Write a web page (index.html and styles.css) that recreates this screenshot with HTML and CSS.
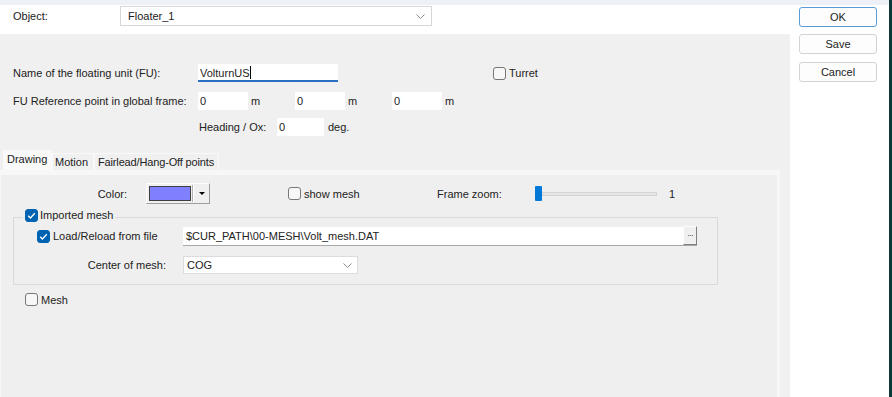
FILE: index.html
```html
<!DOCTYPE html>
<html>
<head>
<meta charset="utf-8">
<title>Floating unit</title>
<link rel="stylesheet" href="styles.css">
</head>
<body>
<div class="app">
  <div class="top-strip"></div>
  <div class="window">
    <div class="main">
      <div class="header">
        <span class="obj-lbl">Object:</span>
        <div class="combo obj-combo">
          <span>Floater_1</span>
          <svg class="chev" width="9" height="5" viewBox="0 0 9 5"><polyline points="0.5,0.5 4.5,4.5 8.5,0.5" fill="none" stroke="#8a8a8a" stroke-width="1"/></svg>
        </div>
      </div>
      <div class="panel">
        <div class="row name-row">
          <span class="lbl-w">Name of the floating unit (FU):</span>
          <div class="field name-field">VolturnUS<span class="caret"></span></div>
          <label class="check turret"><span class="box"></span>Turret</label>
        </div>
        <div class="row ref-row">
          <span class="lbl-w">FU Reference point in global frame:</span>
          <div class="field num">0</div><span class="unit">m</span>
          <div class="field num">0</div><span class="unit">m</span>
          <div class="field num">0</div><span class="unit">m</span>
        </div>
        <div class="row head-row">
          <span class="heading-lbl">Heading / Ox:</span>
          <div class="field num head-field">0</div><span class="deg">deg.</span>
        </div>
        <div class="tabs">
          <div class="tab active t1">Drawing</div>
          <div class="tab t2">Motion</div>
          <div class="tab t3">Fairlead/Hang-Off points</div>
        </div>
        <div class="tabpanel">
          <div class="r1">
            <span class="color-lbl">Color:</span>
            <div class="colorbtn">
              <span class="swatch"></span>
              <span class="sep"></span>
              <span class="arrow-cell"><span class="arrow"></span></span>
            </div>
            <label class="check showmesh"><span class="box"></span>show mesh</label>
            <span class="zoom-lbl">Frame zoom:</span>
            <div class="slider"><span class="thumb"></span><span class="track"></span></div>
            <span class="zoom-val">1</span>
          </div>
          <fieldset class="group">
            <legend class="legend"><span class="box on"><svg width="11" height="11" viewBox="0 0 11 11"><polyline points="2.2,5.8 4.4,8 8.8,3.2" fill="none" stroke="#fff" stroke-width="1.3"/></svg></span><span>Imported mesh</span></legend>
            <div class="grow load-row">
              <label class="check load-check"><span class="box on"><svg width="11" height="11" viewBox="0 0 11 11"><polyline points="2.2,5.8 4.4,8 8.8,3.2" fill="none" stroke="#fff" stroke-width="1.3"/></svg></span>Load/Reload from file</label>
              <div class="file-field"><span>$CUR_PATH\00-MESH\Volt_mesh.DAT</span><span class="dots">···</span></div>
            </div>
            <div class="grow center-row">
              <span class="center-lbl">Center of mesh:</span>
              <div class="combo cog">
                <span>COG</span>
                <svg class="chev" width="9" height="5" viewBox="0 0 9 5"><polyline points="0.5,0.5 4.5,4.5 8.5,0.5" fill="none" stroke="#8a8a8a" stroke-width="1"/></svg>
              </div>
            </div>
          </fieldset>
          <label class="check mesh-check"><span class="box"></span>Mesh</label>
        </div>
      </div>
    </div>
    <div class="side">
      <div class="btn btn-ok">OK</div>
      <div class="btn">Save</div>
      <div class="btn btn-cancel">Cancel</div>
    </div>
  </div>
</div>
<div class="edge"></div>
</body>
</html>
```
FILE: styles.css
```css
* { box-sizing: border-box; }
html, body { margin: 0; padding: 0; }
body {
  width: 892px;
  height: 397px;
  overflow: hidden;
  display: flex;
  background: #fff;
  font-family: "Liberation Sans", Arial, sans-serif;
  font-size: 11px;
  color: #222;
}
.app { width: 889px; display: flex; flex-direction: column; }
.edge { width: 3px; background: #0b3a3a; }
.top-strip { height: 5px; background: #edf1f7; }
.window { flex: 1; display: flex; }
.main { width: 790px; display: flex; flex-direction: column; }

.header {
  height: 29px;
  background: #fff;
  display: flex;
  align-items: flex-start;
  padding: 1px 0 0 13px;
}
.obj-lbl { width: 107px; line-height: 20px; }
.combo {
  height: 20px;
  background: #fff;
  border: 1px solid #d6d6d6;
  display: flex;
  align-items: center;
  justify-content: space-between;
}
.obj-combo { width: 312px; padding: 0 6px 0 7px; }
.chev { display: block; }

.panel { flex: 1; background: #f0f0f0; padding-top: 30px; display: flex; flex-direction: column; }
.row { display: flex; align-items: center; height: 18px; padding-left: 13px; }
.lbl-w { width: 185px; }
.field {
  height: 18px;
  background: #fff;
  display: flex;
  align-items: center;
  padding-left: 2px;
}
.name-field { width: 140px; border-bottom: 2px solid #2a6fc4; padding-top: 1px; }
.caret { display: inline-block; width: 1px; height: 13px; background: #000; }
.num { width: 50px; }
.unit { width: 47px; padding-left: 3px; }
.turret { margin-left: 155px; }
.ref-row { margin-top: 10px; }
.head-row { margin-top: 8px; }
.heading-lbl { margin-left: 186px; width: 78px; }
.head-field { width: 47px; }
.deg { margin-left: 4px; }

.check { display: flex; align-items: center; gap: 3px; white-space: nowrap; }
.box {
  width: 13px;
  height: 13px;
  border: 1px solid #777;
  border-radius: 3px;
  background: #f7f7f7;
  display: flex;
  align-items: center;
  justify-content: center;
  flex: none;
}
.box.on { background: #0063b1; border-color: #0063b1; }
.box svg { display: block; }

.tabs {
  margin-top: 14px;
  height: 20px;
  display: flex;
  align-items: flex-end;
  padding-left: 3px;
}
.tab {
  height: 17px;
  display: flex;
  align-items: center;
  white-space: nowrap;
  border: 1px solid #f9f9f9;
  border-bottom: none;
  background: #f0f0f0;
}
.tab.active { height: 20px; background: #f9f9f9; align-items: flex-start; padding-top: 2px; }
.t1 { width: 49px; padding-left: 3px; }
.t2 { width: 42px; padding-left: 2px; }
.t3 { width: 125px; padding-left: 3px; letter-spacing: -0.15px; }

.tabpanel {
  flex: 1;
  margin-right: 10px;
  background: #efefef;
  border-top: 5px solid #f7f7f7;
  border-right: 3px solid #f7f7f7;
  border-left: 1px solid #f7f7f7;
  padding-top: 8px;
}
.r1 { display: flex; align-items: center; height: 21px; }
.color-lbl { width: 126px; text-align: right; }
.colorbtn {
  margin-left: 19px;
  width: 64px;
  height: 21px;
  display: flex;
  align-items: center;
  padding: 2px 0 2px 2px;
  border: 1px solid;
  border-color: #fdfdfd #9e9e9e #9e9e9e #fdfdfd;
  background: #f0f0f0;
}
.swatch { width: 42px; height: 15px; background: #8080ff; border: 1px solid #404040; }
.sep { width: 1px; height: 17px; margin-left: 1px; background: #b0b0b0; box-shadow: 1px 0 #fff; }
.arrow-cell { flex: 1; display: flex; justify-content: center; align-items: center; }
.arrow { width: 0; height: 0; border-left: 3px solid transparent; border-right: 3px solid transparent; border-top: 3px solid #000; margin-left: 1px; }
.showmesh { margin-left: 78px; width: 149px; }
.zoom-lbl { width: 98px; }
.slider { width: 122px; height: 15px; display: flex; align-items: center; }
.thumb { width: 7px; height: 15px; background: #0078d7; border-radius: 1px; }
.track { flex: 1; height: 4px; background: #e6e6e6; border: 1px solid #d4d4d4; }
.zoom-val { margin-left: 12px; }

.group {
  margin: 4px 0 0 12px;
  padding: 0 0 10px 0;
  width: 705px;
  border: 1px solid #dadada;
  min-inline-size: 0;
}
.legend {
  margin-left: 9px;
  padding: 1px 2px 4px 2px;
  display: flex;
  align-items: flex-start;
  gap: 2px;
  line-height: 13px;
}
.grow { display: flex; align-items: center; height: 18px; }
.load-row { margin-top: 1px; padding-left: 23px; }
.load-check { width: 146px; }
.file-field {
  width: 514px;
  height: 19px;
  background: #fff;
  border-bottom: 1px solid #a8a8a8;
  display: flex;
  align-items: center;
  justify-content: space-between;
  padding-left: 3px;
}
.dots {
  width: 14px;
  height: 19px;
  margin-top: -1px;
  display: flex;
  align-items: center;
  justify-content: center;
  font-size: 9px;
  color: #555;
  background: #f0f0f0;
  border: 1px solid;
  border-color: #fdfdfd #808080 #808080 #fdfdfd;
  letter-spacing: -1px;
}
.center-row { margin-top: 11px; }
.center-lbl { width: 152px; text-align: right; }
.cog { margin-left: 17px; width: 175px; height: 18px; padding: 0 5px 0 3px; border-color: #dcdcdc; }
.mesh-check { margin: 8px 0 0 24px; }

.side {
  width: 99px;
  background: #fff;
  padding: 2px 0 0 9px;
  display: flex;
  flex-direction: column;
  gap: 7px;
}
.btn {
  width: 78px;
  height: 20px;
  border: 1px solid #d3d3d3;
  border-radius: 3px;
  background: #fdfdfd;
  display: flex;
  align-items: center;
  justify-content: center;
}
.btn-ok { border-color: #5c9ad6; }
.btn-cancel { margin-top: 1px; }
```
